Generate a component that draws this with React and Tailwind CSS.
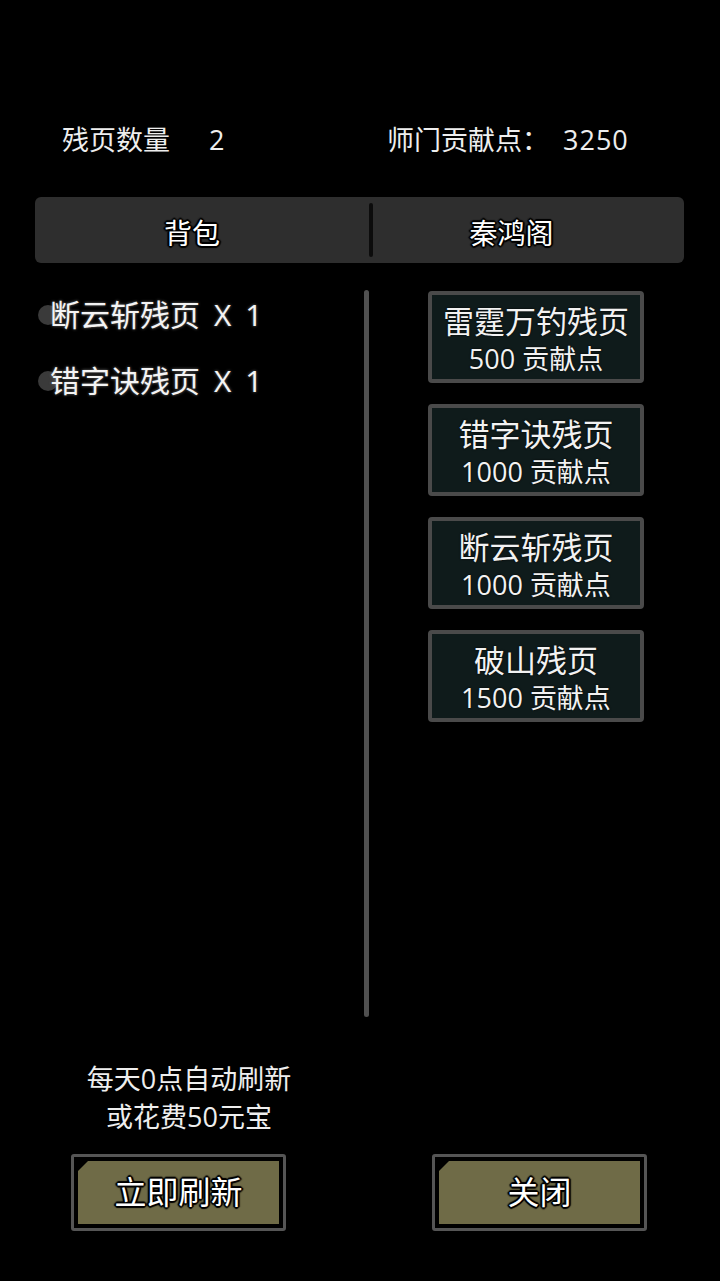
import React from "react";

const font = { fontFamily: '"Open Sans", "Noto Sans CJK SC", "Noto Sans", sans-serif' };

const outline =
  "[text-shadow:0_0_2px_#000,1px_1px_1px_#000,-1px_-1px_1px_#000,1px_-1px_1px_#000,-1px_1px_1px_#000,2px_0_1px_#000,-2px_0_1px_#000,0_2px_1px_#000,0_-2px_1px_#000]";

function Card({ name, price }) {
  return (
    <div className="w-[216px] h-[92px] rounded-[4px] border-[4px] border-[#4a4a4a] bg-[#0f1b1b] flex flex-col items-center pt-[10px] gap-[7px]">
      <div className="text-[31px] leading-[32px] text-[#f2f2f2] [text-shadow:0_0_2px_#000]">{name}</div>
      <div className="text-[27px] leading-[30px] text-[#f2f2f2] [text-shadow:0_0_2px_#000]">{price}</div>
    </div>
  );
}

function Button({ label }) {
  return (
    <div className="w-[215px] h-[77px] rounded-[3px] border-[3px] border-[#555] bg-black p-[4px]">
      <div className="w-full h-full bg-[#6f6b47] [clip-path:polygon(10px_0,100%_0,100%_100%,0_100%,0_10px)] flex items-center justify-center pb-[2px]">
        <span className={"text-[32px] leading-none text-white " + outline}>{label}</span>
      </div>
    </div>
  );
}

function ListItem({ name }) {
  return (
    <div className="relative h-[40px] flex items-center">
      <div className="absolute left-[-12px] top-[10px] w-[20px] h-[20px] rounded-full bg-[#3a3a3a]" />
      <span className="relative text-[30px] leading-[40px] text-[#f4f4f4] [text-shadow:0_0_3px_#777] whitespace-pre">
        {name}
        <span className="ml-[14px]">X</span>
        <span className="ml-[14px]">1</span>
      </span>
    </div>
  );
}

export default function App() {
  return (
    <div className="w-[720px] h-[1281px] bg-black text-white overflow-hidden flex flex-col" style={font}>
      {/* header */}
      <div className="pt-[122px] h-[158px] flex text-[27px] leading-[36px] text-[#eeeeee]">
        <div className="w-[387px] pl-[62px] flex">
          <span>残页数量</span>
          <span className="ml-[39px]">2</span>
        </div>
        <div className="flex">
          <span>师门贡献点：</span>
          <span className="ml-[14px] tracking-[1px]">3250</span>
        </div>
      </div>

      {/* tabs */}
      <div className="mt-[39px] mx-[35px] w-[649px] h-[66px] rounded-[6px] bg-[#2e2e2e] flex items-center">
        <div className={"w-[314px] flex justify-center pt-[6px] text-[28px] text-white " + outline}>背包</div>
        <div className="w-[4px] h-[54px] ml-[20px] bg-[#0c0c0c] rounded-full" />
        <div className={"flex-1 flex justify-center pt-[6px] pr-[34px] text-[28px] text-white " + outline}>秦鸿阁</div>
      </div>

      {/* body */}
      <div className="flex h-[755px] pt-[27px]">
        <div className="w-[364px] pl-[50px] pt-[5px] flex flex-col gap-[26px]">
          <ListItem name="断云斩残页" />
          <ListItem name="错字诀残页" />
        </div>
        <div className="w-[5px] h-[727px] rounded-full bg-[#505050]" />
        <div className="pl-[59px] pt-[1px] flex flex-col gap-[21px]">
          <Card name="雷霆万钓残页" price="500 贡献点" />
          <Card name="错字诀残页" price="1000 贡献点" />
          <Card name="断云斩残页" price="1000 贡献点" />
          <Card name="破山残页" price="1500 贡献点" />
        </div>
      </div>

      {/* bottom note */}
      <div className="pt-[42px] w-[378px] flex flex-col items-center text-[27px] leading-[38px] text-[#eeeeee]">
        <div>每天0点自动刷新</div>
        <div>或花费50元宝</div>
      </div>

      {/* buttons */}
      <div className="mt-[18px] flex pl-[71px] gap-[146px]">
        <Button label="立即刷新" />
        <Button label="关闭" />
      </div>
    </div>
  );
}
